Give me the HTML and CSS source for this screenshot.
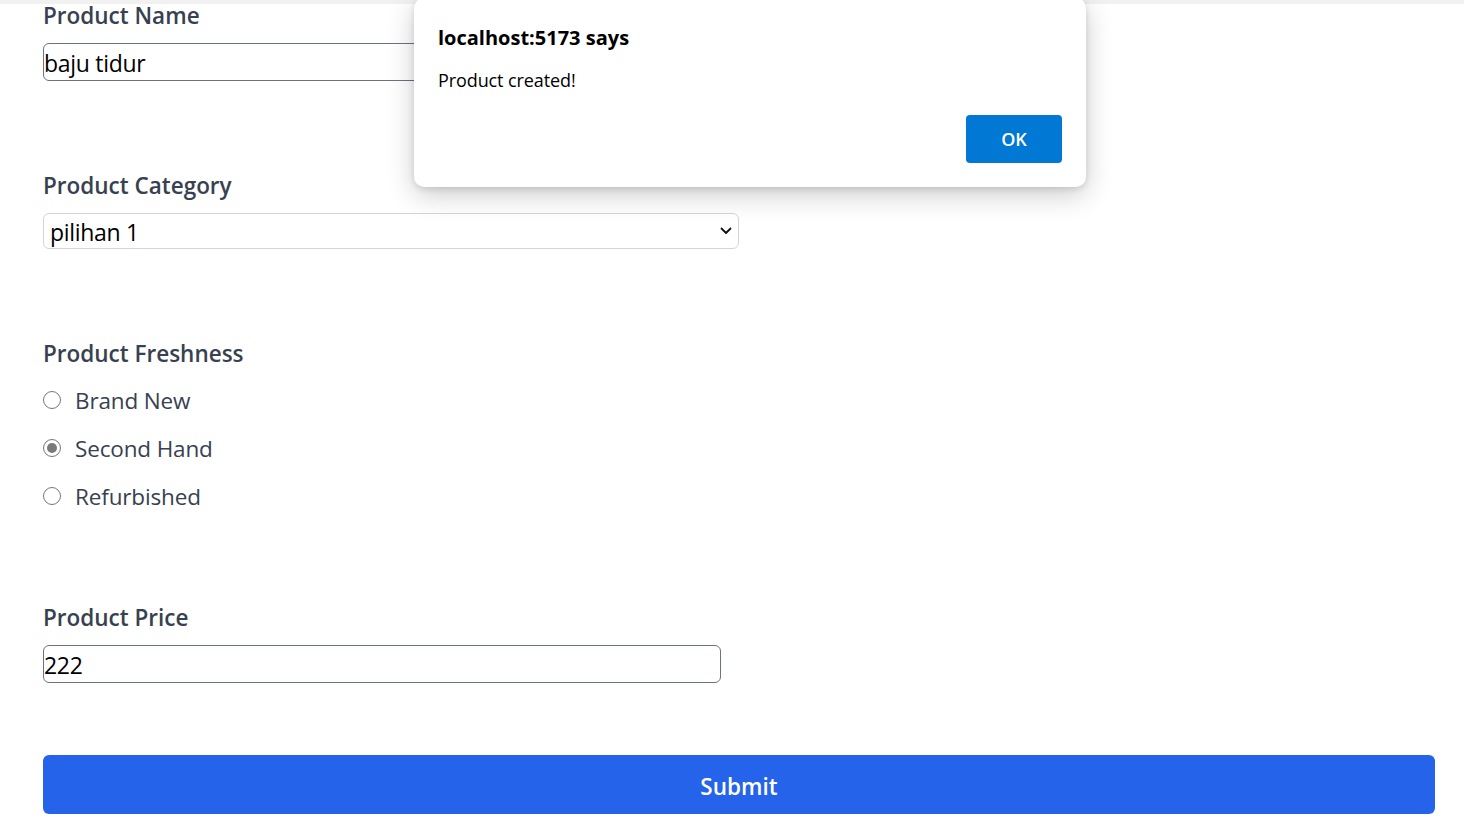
FILE: index.html
```html
<!DOCTYPE html>
<html lang="en">
<head>
<meta charset="utf-8">
<title>Create Product</title>
<link rel="stylesheet" href="styles.css">
</head>
<body>
<div class="topbar"></div>
<form class="form">
  <div class="field field-name">
    <label class="label" for="name">Product Name</label>
    <input class="text-input name-input" id="name" type="text" value="baju tidur">
  </div>
  <div class="field field-category">
    <label class="label" for="cat">Product Category</label>
    <div class="select-wrap">
      <select class="select" id="cat">
        <option>pilihan 1</option>
        <option>pilihan 2</option>
      </select>
      <svg class="chevron" width="12" height="8" viewBox="0 0 12 8"><path d="M1.5 1.5 L6 6 L10.5 1.5" fill="none" stroke="#111" stroke-width="1.8" stroke-linecap="round" stroke-linejoin="round"/></svg>
    </div>
  </div>
  <div class="field field-fresh">
    <div class="label">Product Freshness</div>
    <div class="radios">
      <label class="radio-row"><span class="radio"></span><span>Brand New</span></label>
      <label class="radio-row"><span class="radio checked"></span><span>Second Hand</span></label>
      <label class="radio-row"><span class="radio"></span><span>Refurbished</span></label>
    </div>
  </div>
  <div class="field field-price">
    <label class="label" for="price">Product Price</label>
    <input class="text-input price-input" id="price" type="text" value="222">
  </div>
  <button class="submit" type="button">Submit</button>
</form>

<div class="dialog" role="alertdialog">
  <div class="dialog-title">localhost:5173 says</div>
  <div class="dialog-msg">Product created!</div>
  <div class="dialog-actions"><button class="ok" type="button">OK</button></div>
</div>
</body>
</html>
```

FILE: styles.css
```css
* { box-sizing: border-box; }
html, body { margin: 0; padding: 0; background: #fff; }
body {
  font-family: "Open Sans", "Noto Sans", sans-serif;
  width: 1464px;
  height: 832px;
  overflow: hidden;
  position: relative;
}
.topbar { height: 4px; background: #f1f1f1; }
.form {
  padding: 0 29px 0 43px;
  display: flex;
  flex-direction: column;
  margin-top: -3px;
}
.field { display: flex; flex-direction: column; }
.label {
  font-size: 22.5px;
  line-height: 28px;
  padding-top: 1px;
  font-weight: 600;
  color: #374151;
  margin-bottom: 13px;
}
.text-input {
  font-family: inherit;
  font-size: 23px;
  color: #000;
  height: 38px;
  border: 1px solid #6b7280;
  border-radius: 6px;
  padding: 2px 0 0 0;
  outline: none;
  letter-spacing: -0.3px;
}
.name-input { width: 440px; }
.price-input { width: 678px; }
.field-name { margin-bottom: 90px; }
.field-category { margin-bottom: 90px; }
.select-wrap { position: relative; width: 696px; }
.select {
  appearance: none;
  -webkit-appearance: none;
  width: 100%;
  height: 36px;
  border: 1px solid #d1d5db;
  border-radius: 6px;
  background: #fff;
  font-family: inherit;
  font-size: 23px;
  color: #000;
  padding: 2px 0 0 6px;
  letter-spacing: -0.3px;
}
.chevron { position: absolute; right: 7px; top: 14px; }
.field-fresh .label { margin-bottom: 21px; }
.radios { display: flex; flex-direction: column; gap: 24px; }
.radio-row {
  display: flex;
  align-items: center;
  gap: 14px;
  font-size: 22.5px;
  line-height: 24px;
  color: #374151;
  letter-spacing: -0.15px;
}
.radio {
  width: 18px;
  height: 18px;
  border: 1.5px solid #767676;
  border-radius: 50%;
  flex: none;
  display: flex;
  align-items: center;
  justify-content: center;
  margin-top: -2px;
}
.radio.checked::after {
  content: "";
  width: 10px;
  height: 10px;
  border-radius: 50%;
  background: #7a7a7a;
}
.field-fresh { margin-bottom: 94px; }
.field-price { margin-bottom: 72px; }
.submit {
  height: 59px;
  width: 100%;
  border: none;
  border-radius: 6px;
  background: #2563eb;
  color: #fff;
  font-family: inherit;
  font-size: 22.5px;
  font-weight: 600;
  padding-top: 4px;
}
.dialog {
  position: absolute;
  left: 414px;
  top: -2px;
  width: 672px;
  height: 189px;
  background: #fff;
  border-radius: 10px;
  box-shadow: 0 8px 28px rgba(0,0,0,0.2), 0 2px 6px rgba(0,0,0,0.12);
  padding: 27px 24px 24px 24px;
  font-family: "Open Sans", "Noto Sans", sans-serif;
}
.dialog-title {
  font-size: 20px;
  font-weight: 700;
  color: #000;
  line-height: 26px;
}
.dialog-msg {
  margin-top: 17px;
  font-size: 18px;
  line-height: 24px;
  color: #000;
  letter-spacing: -0.1px;
}
.dialog-actions { display: flex; justify-content: flex-end; margin-top: 23px; }
.ok {
  width: 96px;
  height: 48px;
  border: none;
  border-radius: 4px;
  background: #0078d4;
  color: #fff;
  font-family: inherit;
  font-size: 18px;
  font-weight: 600;
}
```
